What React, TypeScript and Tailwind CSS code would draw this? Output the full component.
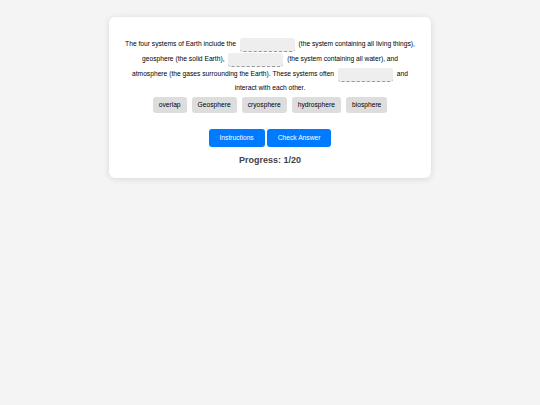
import React from 'react';

const Blank: React.FC = () => (
  <span className="inline-block w-[55px] h-[14px] mx-[2px] my-[0.5px] align-middle bg-[#eeeeee] border-b border-dashed border-[#999] rounded-[3px]" />
);

const words = ['overlap', 'Geosphere', 'cryosphere', 'hydrosphere', 'biosphere'];

const App: React.FC = () => {
  return (
    <div className="min-h-[405px] bg-[#f4f4f4] pt-[17px] font-['Liberation_Sans',Arial,sans-serif]">
      <div className="mx-auto w-[322px] bg-white rounded-[6px] shadow-[0_1px_6px_rgba(0,0,0,0.12)] px-[13px] pt-[20px] pb-[10px] flex flex-col items-center">
        <p className="text-[6.7px] leading-[11px] text-black text-center">
          The four systems of Earth include the <Blank /> (the system containing all living things),
          geosphere (the solid Earth), <Blank /> (the system containing all water), and
          <br />
          atmosphere (the gases surrounding the Earth). These systems often <Blank /> and
          interact with each other.
        </p>
        <div className="flex gap-[5px] mt-[4px]">
          {words.map((w) => (
            <span key={w} className="px-[6px] h-[16px] flex items-center bg-[#dddddd] rounded-[3px] text-[6.7px] text-black">
              {w}
            </span>
          ))}
        </div>
        <div className="flex gap-[2px] mt-[16px]">
          <button className="h-[18px] px-[11px] bg-[#007bff] text-white text-[6.7px] rounded-[3px]">Instructions</button>
          <button className="h-[18px] px-[11px] bg-[#007bff] text-white text-[6.7px] rounded-[3px]">Check Answer</button>
        </div>
        <div className="mt-[7px] text-[9px] font-bold text-[#444]">Progress: 1/20</div>
      </div>
    </div>
  );
};

export default App;
